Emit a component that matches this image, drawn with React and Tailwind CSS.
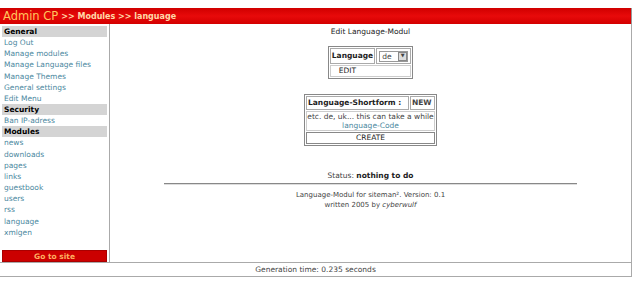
import React from "react";

const general = ["Log Out", "Manage modules", "Manage Language files", "Manage Themes", "General settings", "Edit Menu"];
const security = ["Ban IP-adress"];
const modules = ["news", "downloads", "pages", "links", "guestbook", "users", "rss", "language", "xmlgen"];

function Section({ title, items }) {
  return (
    <div>
      <div className="bg-[#d4d4d4] h-[11px] leading-[11px] px-[2px] font-bold text-black">{title}</div>
      {items.map((item) => (
        <div key={item} className="h-[11.2px] leading-[12px] px-[2px] text-[#4b88a0]">
          {item}
        </div>
      ))}
    </div>
  );
}

export default function App() {
  return (
    <div className="w-[640px] h-[288px] bg-white text-[7.5px] text-[#444]" style={{ fontFamily: "'DejaVu Sans', Verdana, sans-serif" }}>
      <div className="pt-[8px] w-[632px]">
        {/* Header */}
        <div className="h-[16px] bg-gradient-to-b from-[#d00000] via-[#e80a0a] to-[#d40000] flex items-end pb-[1px] pl-[3px] border-r border-[#999]">
          <span className="text-[11.5px] leading-[14px] text-[#ffc65c]">Admin CP</span>
          <span className="ml-[3px] text-[8px] leading-[13px] font-bold text-[#ffd9a8]">&gt;&gt; Modules &gt;&gt; language</span>
        </div>

        <div className="flex border-r border-b border-[#aaa] h-[239px]">
          {/* Sidebar */}
          <div className="w-[110px] border-r border-[#aaa] pl-[2px] pr-[2px] pt-[2px] flex flex-col">
            <Section title="General" items={general} />
            <Section title="Security" items={security} />
            <Section title="Modules" items={modules} />
            <div className="mt-[12px] h-[12px] bg-[#cc0000] border border-[#a00] text-[#ffb060] font-bold text-center leading-[11px] text-[7.5px]">
              Go to site
            </div>
          </div>

          {/* Content */}
          <div className="flex-1 flex flex-col items-center pt-[2px]">
            <div className="mt-[1px] text-[7.5px] text-[#222] leading-[10px]">Edit Language-Modul</div>

            <table className="mt-[9px] border border-[#888] border-separate border-spacing-[1px] text-[7.5px] w-[79px]">
              <tbody>
                <tr>
                  <td className="border border-[#aaa] px-[1px] h-[16px] font-bold text-[#222]">Language</td>
                  <td className="border border-[#aaa] px-[2px]">
                    <div className="flex items-center border border-[#999] h-[11px] w-[29px] bg-white">
                      <span className="flex-1 pl-[2px] leading-[9px]">de</span>
                      <span className="w-[9px] h-[9px] bg-[#ddd] border border-[#888] flex items-center justify-center text-[5px]">▼</span>
                    </div>
                  </td>
                </tr>
                <tr>
                  <td colSpan={2} className="border border-[#ccc] h-[10px] leading-[10px] pl-[8px] text-[#222]">EDIT</td>
                </tr>
              </tbody>
            </table>

            <table className="mt-[15px] border border-[#888] border-separate border-spacing-[1px] text-[7.5px] w-[133px]">
              <tbody>
                <tr>
                  <td className="border border-[#aaa] h-[14px] px-[1px] font-bold text-[#222] whitespace-nowrap">Language-Shortform :</td>
                  <td className="border border-[#aaa] px-[1px] font-bold text-[#444]">NEW</td>
                </tr>
                <tr>
                  <td colSpan={2} className="border border-[#ccc] text-center leading-[9px] whitespace-nowrap">
                    etc. de, uk... this can take a while
                    <br />
                    <span className="text-[#4b88a0]">language-Code</span>
                  </td>
                </tr>
                <tr>
                  <td colSpan={2} className="border border-[#888] h-[12px] leading-[10px] text-center text-[#222]">CREATE</td>
                </tr>
              </tbody>
            </table>

            <div className="mt-[25px] text-[7.5px] leading-[10px]">
              Status: <span className="font-bold text-[#222]">nothing to do</span>
            </div>
            <div className="mt-[2px] w-[413px] h-[2px] border-t border-[#888] border-b border-b-[#ddd]"></div>
            <div className="mt-[5px] text-center text-[7px] leading-[10px]">
              Language-Modul for siteman². Version: 0.1
              <br />
              written 2005 by <i>cyberwulf</i>
            </div>
          </div>
        </div>

        {/* Footer */}
        <div className="h-[14px] border-r border-b border-[#aaa] text-center leading-[14px] text-[7.5px]">
          Generation time: 0.235 seconds
        </div>
      </div>
    </div>
  );
}
